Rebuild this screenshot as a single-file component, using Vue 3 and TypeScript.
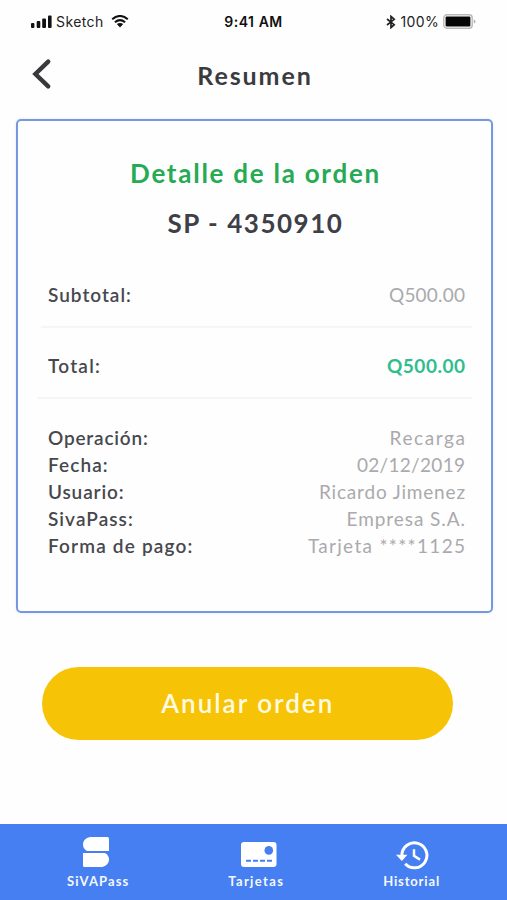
<script setup lang="ts">
interface Row {
  label: string
  value: string
  labelTracking: number
  valueTracking: number
}

const orderNumber = 'SP - 4350910'

const details: Row[] = [
  { label: 'Operación:', value: 'Recarga', labelTracking: 0.81, valueTracking: 1.6 },
  { label: 'Fecha:', value: '02/12/2019', labelTracking: 1.1, valueTracking: 0.3 },
  { label: 'Usuario:', value: 'Ricardo Jimenez', labelTracking: 0.85, valueTracking: 0.83 },
  { label: 'SivaPass:', value: 'Empresa S.A.', labelTracking: 1.06, valueTracking: 0.93 },
  { label: 'Forma de pago:', value: 'Tarjeta ****1125', labelTracking: 1.17, valueTracking: 1.31 }
]

const tracking = (px: number) => ({ letterSpacing: `${px}px`, marginRight: `${-px}px` })
</script>

<template>
  <div class="screen">
    <header class="status">
      <div class="status-left">
        <svg class="signal" width="21" height="13" viewBox="0 0 21 13">
          <rect x="0" y="8" width="3.4" height="5" rx="1" />
          <rect x="5.7" y="6" width="3.6" height="7" rx="1" />
          <rect x="11.2" y="3.5" width="3.8" height="9.5" rx="1" />
          <rect x="17" y="0.5" width="3.6" height="12.5" rx="1" />
        </svg>
        <span class="carrier">Sketch</span>
        <svg class="wifi" width="18" height="13" viewBox="0 0 18 13">
          <path d="M1.2 4.3Q9-2.3 16.8 4.3M3.9 7.2Q9 2.9 14.1 7.2" fill="none" stroke="#111" stroke-width="2.1" />
          <path d="M5.8 9.1Q9 6.7 12.2 9.1L9 12.4Z" fill="#111" />
        </svg>
      </div>
      <span class="time">9:41 AM</span>
      <div class="status-right">
        <svg width="10" height="14" viewBox="0 0 10 14">
          <path d="M1 4 8.2 9.7 5 12.6V1.4L8.2 4.3 1 10" fill="none" stroke="#222" stroke-width="1.7" />
        </svg>
        <span class="percent">100%</span>
        <svg width="33" height="15" viewBox="0 0 33 15">
          <rect x=".8" y=".8" width="28.4" height="13.4" rx="3" fill="#fff" stroke="#b9b9b9" stroke-width="1.4" />
          <rect x="2.6" y="2.6" width="24.8" height="9.8" rx="1" fill="#050505" />
          <path d="M30.8 5.2Q32.6 6 32.6 7.5T30.8 9.8Z" fill="#b5b5b5" />
        </svg>
      </div>
    </header>

    <div class="titlebar">
      <button class="back" aria-label="Volver">
        <svg width="20" height="32" viewBox="0 0 20 32">
          <path d="M16.2 3.6 3.4 16 16.2 28.4" fill="none" stroke="#39393b" stroke-width="4.4" stroke-linecap="round" stroke-linejoin="miter" />
        </svg>
      </button>
      <h1>Resumen</h1>
    </div>

    <main class="card">
      <h2>Detalle de la orden</h2>
      <p class="order">{{ orderNumber }}</p>
      <div class="row subtotal">
        <span class="label">Subtotal:</span>
        <span class="value" :style="tracking(0.2)">Q500.00</span>
      </div>
      <hr class="short" />
      <div class="row total">
        <span class="label">Total:</span>
        <span class="value amount" :style="tracking(0.51)">Q500.00</span>
      </div>
      <hr />
      <div class="details">
        <div v-for="row in details" :key="row.label" class="row">
          <span class="label" :style="tracking(row.labelTracking)">{{ row.label }}</span>
          <span class="value" :style="tracking(row.valueTracking)">{{ row.value }}</span>
        </div>
      </div>
    </main>

    <button class="cancel">Anular orden</button>

    <nav class="tabs">
      <a class="tab pass">
        <svg width="27" height="31" viewBox="0 0 27 31">
          <path d="M7 0H24.5Q26 0 26 1.5V14H4Q0 11.5 0 7.5Q0 1.5 7 0Z" fill="#fff" />
          <path d="M0 16H22Q26 18.5 26 22.5Q26 28 19.5 30H1.5Q0 30 0 28.5Z" fill="#fff" />
        </svg>
        <span>SiVAPass</span>
      </a>
      <a class="tab cards">
        <svg width="36" height="26" viewBox="0 0 36 26">
          <rect x="0" y="0" width="35.5" height="25" rx="3" fill="#fff" />
          <circle cx="27.8" cy="8.4" r="4.3" fill="#467ff1" />
          <path d="M5 18.7H31" stroke="#467ff1" stroke-width="2.1" stroke-dasharray="5 2" />
        </svg>
        <span>Tarjetas</span>
      </a>
      <a class="tab history">
        <svg width="33" height="29" viewBox="0 0 33 29">
          <path d="M5.9 14.2A12.5 12.5 0 1 1 9.2 22.8" fill="none" stroke="#fff" stroke-width="3" />
          <path d="M0 13.8H11.4L5.9 20Z" fill="#fff" />
          <path d="M18 8.3V14.8L24 18.6" fill="none" stroke="#fff" stroke-width="2.5" />
        </svg>
        <span>Historial</span>
      </a>
    </nav>
  </div>
</template>

<style>
body {
  margin: 0;
  background: #fefefe;
}
</style>

<style scoped>
.screen {
  display: flex;
  flex-direction: column;
  width: 507px;
  height: 900px;
  overflow: hidden;
  background: #fefefe;
  font-family: Lato, 'Open Sans', sans-serif;
  color: #3e3f47;
}

h1, h2, p, hr { margin: 0; }

button {
  border: 0;
  padding: 0;
  background: none;
  font-family: inherit;
}

svg { display: block; flex: none; }

.status {
  display: grid;
  grid-template-columns: 1fr auto 1fr;
  align-items: center;
  height: 43px;
  padding: 0 31px;
  font: 400 14px/20px Inter, sans-serif;
  color: #222;
}

.status-left, .status-right {
  display: flex;
  align-items: center;
}

.status-left { gap: 4px; }
.signal { fill: #111; }
.carrier { letter-spacing: 0.41px; }
.wifi { margin-left: 3px; }
.time { font-weight: 600; letter-spacing: 0.55px; color: #111; }
.status-right { justify-content: flex-end; gap: 4px; }
.percent { letter-spacing: 0.35px; }

.titlebar {
  display: grid;
  grid-template-columns: 40px 1fr 40px;
  align-items: center;
  height: 64px;
  padding: 0 29px 0 32px;
}

.back { justify-self: start; margin-bottom: 3px; }

h1 {
  text-align: center;
  font-size: 25px;
  line-height: 30px;
  font-weight: 700;
  letter-spacing: 1.9px;
  color: #3b3b3e;
}

.card {
  box-sizing: border-box;
  width: 477px;
  height: 494px;
  margin: 12px 0 0 16px;
  padding: 36px 19px 0 19px;
  border: 2px solid #7898de;
  border-radius: 5px;
  box-shadow: 0 0 3px #dce6fb;
}

h2, .order {
  padding-left: 2px;
  text-align: center;
  font-size: 26px;
  line-height: 32px;
  font-weight: 700;
}

h2 { letter-spacing: 1.74px; color: #27aa54; }
.order { margin-top: 18px; letter-spacing: 1.53px; }

.row {
  display: flex;
  justify-content: space-between;
  padding: 0 7px 0 11px;
  font-size: 19px;
  line-height: 27px;
}

.label { font-weight: 600; color: #47484e; }
.value { color: #aaaaad; }
.subtotal { margin-top: 42px; letter-spacing: 0.99px; }
.total { margin-top: 24px; letter-spacing: 1.24px; }
.amount { font-weight: 700; color: #2fbd8f; }

hr {
  height: 2px;
  border: 0;
  margin-top: 18px;
  background: #f6f6f7;
}

.short { margin-left: 4px; }
.details { margin-top: 25px; }

.cancel {
  width: 411px;
  height: 73px;
  margin: 53.5px 0 0 42.3px;
  border-radius: 37px;
  background: #f7c306;
  color: #fffbe0;
  font-size: 26px;
  font-weight: 600;
  letter-spacing: 2px;
}

.tabs {
  display: flex;
  justify-content: space-between;
  box-sizing: border-box;
  height: 76px;
  margin-top: auto;
  padding: 0 67px 11px 67px;
  background: #467ff1;
}

.tab {
  display: flex;
  flex-direction: column;
  align-items: center;
  justify-content: flex-end;
  gap: 5px;
  color: #f4f8ff;
  font-size: 13px;
  line-height: 16px;
  font-weight: 700;
}

.pass { letter-spacing: 1.09px; }
.cards { letter-spacing: 1.37px; }
.history { letter-spacing: 0.85px; }
.pass svg { margin-right: 4px; }
.cards svg { margin-left: 5px; }
.history svg { margin: 0 0 -2px 2px; }
</style>
